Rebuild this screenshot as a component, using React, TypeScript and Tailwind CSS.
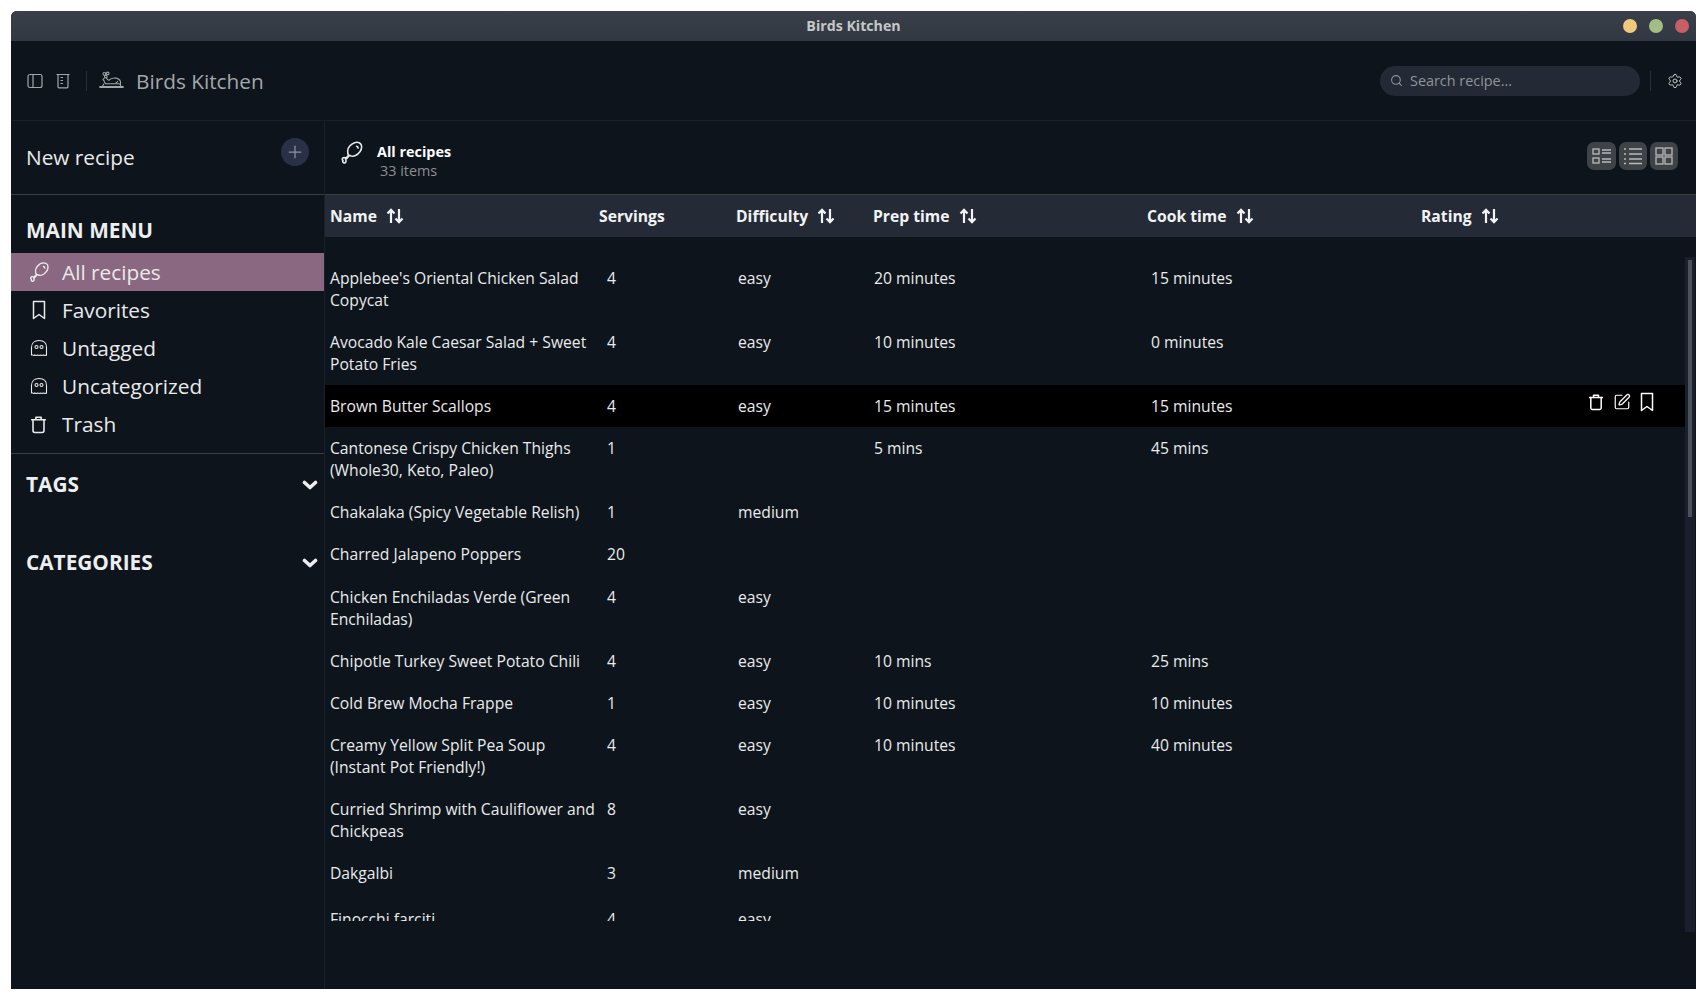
import { Plus, Search, Settings, SquarePen } from "lucide-react"

type Recipe = { name: string; servings?: string; difficulty?: string; prep?: string; cook?: string; active?: boolean; tall?: boolean }

const recipes: Recipe[] = [
  { name: "Applebee's Oriental Chicken Salad Copycat", servings: "4", difficulty: "easy", prep: "20 minutes", cook: "15 minutes" },
  { name: "Avocado Kale Caesar Salad + Sweet Potato Fries", servings: "4", difficulty: "easy", prep: "10 minutes", cook: "0 minutes" },
  { name: "Brown Butter Scallops", servings: "4", difficulty: "easy", prep: "15 minutes", cook: "15 minutes", active: true },
  { name: "Cantonese Crispy Chicken Thighs (Whole30, Keto, Paleo)", servings: "1", prep: "5 mins", cook: "45 mins" },
  { name: "Chakalaka (Spicy Vegetable Relish)", servings: "1", difficulty: "medium" },
  { name: "Charred Jalapeno Poppers", servings: "20" },
  { name: "Chicken Enchiladas Verde (Green Enchiladas)", servings: "4", difficulty: "easy" },
  { name: "Chipotle Turkey Sweet Potato Chili", servings: "4", difficulty: "easy", prep: "10 mins", cook: "25 mins" },
  { name: "Cold Brew Mocha Frappe", servings: "1", difficulty: "easy", prep: "10 minutes", cook: "10 minutes" },
  { name: "Creamy Yellow Split Pea Soup (Instant Pot Friendly!)", servings: "4", difficulty: "easy", prep: "10 minutes", cook: "40 minutes" },
  { name: "Curried Shrimp with Cauliflower and Chickpeas", servings: "8", difficulty: "easy" },
  { name: "Dakgalbi", servings: "3", difficulty: "medium", tall: true },
  { name: "Finocchi farciti", servings: "4", difficulty: "easy" },
]

function Drumstick({ className }: { className?: string }) {
  return (
    <svg viewBox="0 0 24 24" fill="none" stroke="currentColor" strokeWidth="1.4" strokeLinejoin="round" strokeLinecap="round" className={className}>
      <path d="M9.5 14.5c-1.4-2-1.3-5.600.9-8.200C12.800 3.400 16.500 2 19.200 3.500c2.500 1.400 2.300 5.200.3 7.900-2.100 2.900-5.600 4.500-8 3.600l-1.800-.5Z" />
      <path d="M9.500 14.500 6.800 17.200c-.6-.7-1.900-.9-2.600-.2-.7.700-.5 1.700.2 2.100-.4.700-.2 1.700.6 2 .9.400 1.900-.1 2.100-1 .2-.7 0-1.300-.4-1.700l2.800-2.800" />
      <path d="M16.500 6.500c.8.200 1.300.8 1.400 1.600" />
    </svg>
  )
}

function Ghost({ className }: { className?: string }) {
  return (
    <svg viewBox="0 0 18 18" fill="none" stroke="currentColor" strokeWidth="1.1" className={className}>
      <path d="M1.500 16V8.500C1.500 4 4.500 1.500 9 1.500S16.500 4 16.500 8.500V16c-.7.600-1 .600-1.500 0-.5.600-1 .600-1.500 0-.5.600-1 .600-1.500 0-.5.600-1 .600-1.500 0-.5.600-1 .600-1.500 0-.5.600-1 .600-1.500 0-.5.600-1 .600-1.500 0-.5.600-.8.600-1.500 0-.5.600-1 .600-1.500 0Z" />
      <circle cx="6.500" cy="8" r="1.500" />
      <circle cx="11.500" cy="8" r="1.500" />
    </svg>
  )
}

function TrashCan({ className }: { className?: string }) {
  return (
    <svg viewBox="0 0 18 18" fill="none" stroke="currentColor" strokeWidth="1.500" strokeLinejoin="round" className={className}>
      <path d="M2 4.500h14" />
      <path d="M6.500 4.500V2.200h5v2.300" />
      <path d="M3.800 4.500v10.300c0 1 .6 1.700 1.600 1.700h7.200c1 0 1.600-.7 1.600-1.700V4.500" />
    </svg>
  )
}

function BookmarkIcon({ className }: { className?: string }) {
  return (
    <svg viewBox="0 0 14 20" fill="none" stroke="currentColor" strokeWidth="1.500" strokeLinejoin="round" className={className}>
      <path d="M1.500 1.500h11v17L7 14.500l-5.500 4Z" />
    </svg>
  )
}

function Chevron() {
  return (
    <svg viewBox="0 0 16 10" fill="none" stroke="currentColor" strokeWidth="3.600" strokeLinecap="round" strokeLinejoin="round" className="h-[10px] w-[16px]">
      <path d="M2.500 2.500 8 7.500l5.500-5" />
    </svg>
  )
}

function BirdLogo({ className }: { className?: string }) {
  return (
    <svg viewBox="0 0 26 20" fill="none" stroke="currentColor" strokeWidth="1.100" strokeLinecap="round" strokeLinejoin="round" className={className}>
      <circle cx="5.500" cy="3" r="1.500" />
      <circle cx="9" cy="2.600" r="1.400" />
      <circle cx="7" cy="5.800" r="1.400" />
      <path d="M7.500 7c.6 1.800 1.400 2.600 2.700 2.800 1.800-2 4.800-2.900 7.800-2.300 3.300.7 5 3.500 4.500 6.700" />
      <path d="M5.500 7.500 4 8.800c1.400 1.300 2 3 2.600 4.700h14" />
      <path d="M17.800 12.200c.7 0 1.300-.5 1.600-1.200" />
      <path d="M1 16.800h24" strokeWidth="2" />
      <path d="M5 13.500 3.500 16M21.500 13.500l1.500 2.500" />
    </svg>
  )
}

function SortArrows() {
  return (
    <svg viewBox="0 0 18 16" fill="none" stroke="currentColor" strokeWidth="2.200" className="ml-[9px] h-[16px] w-[18px]">
      <path d="M5 15V2M1.500 5.500 5 1.800l3.500 3.700" />
      <path d="M13 1v13M9.500 10.500l3.500 3.700 3.500-3.700" />
    </svg>
  )
}

function CardsIcon() {
  return (
    <svg viewBox="0 0 20 18" fill="none" stroke="currentColor" strokeWidth="1.300" className="h-[18px] w-[20px]">
      <rect x="1" y="2" width="6" height="5" />
      <rect x="1" y="11" width="6" height="5" />
      <path d="M10 3h9M10 6h9M10 12h9M10 15h9" />
    </svg>
  )
}

function ListIcon() {
  return (
    <svg viewBox="0 0 20 18" fill="none" stroke="currentColor" strokeWidth="1.300" className="h-[18px] w-[20px]">
      <path d="M1 2h2M1 7h2M1 12h2M1 16.500h2" />
      <path d="M6 2h13M6 7h13M6 12h13M6 16.500h13" />
    </svg>
  )
}

function GridIcon() {
  return (
    <svg viewBox="0 0 18 18" fill="none" stroke="currentColor" strokeWidth="1.300" className="h-[18px] w-[18px]">
      <rect x="1" y="1" width="7" height="7" />
      <rect x="10" y="1" width="7" height="7" />
      <rect x="1" y="10" width="7" height="7" />
      <rect x="10" y="10" width="7" height="7" />
    </svg>
  )
}

function MenuItem({ icon, label, active }: { icon: React.ReactNode; label: string; active?: boolean }) {
  return (
    <div className={`flex h-[38px] items-center text-[20.8px] text-[#e8eaeb] ${active ? "bg-[#8a6881]" : ""}`}>
      <span className="flex w-[51px] justify-center pl-[4px]">{icon}</span>
      <span className="translate-y-[1px]">{label}</span>
    </div>
  )
}

function HeaderCell({ label, width, sort = true }: { label: string; width: string; sort?: boolean }) {
  return (
    <div className={`flex items-center ${width}`}>
      <span className="translate-y-[1px]">{label}</span>
      {sort && <SortArrows />}
    </div>
  )
}

function Row({ recipe }: { recipe: Recipe }) {
  return (
    <div className={`flex shrink-0 items-start pl-[5px] pt-[10px] leading-[22px] text-[#e9ebec] ${recipe.tall ? "pb-[14px]" : "pb-[10.1px]"} ${recipe.active ? "bg-black" : ""}`}>
      <div className="w-[277px] pr-[4px]">{recipe.name}</div>
      <div className="w-[131px]">{recipe.servings}</div>
      <div className="w-[136px]">{recipe.difficulty}</div>
      <div className="w-[277px]">{recipe.prep}</div>
      <div className="w-[280px]">{recipe.cook}</div>
      {recipe.active && (
        <div className="ml-[156px] flex -translate-y-[3px] items-center gap-[8px] text-white">
          <TrashCan className="h-[18px] w-[18px]" />
          <SquarePen size={18} strokeWidth={1.6} />
          <BookmarkIcon className="ml-[1px] h-[20px] w-[14px]" />
        </div>
      )}
    </div>
  )
}

export default function App() {
  return (
    <div className="h-[1000px] bg-white pl-[11px] pt-[11px] font-['Open_Sans',sans-serif]">
      <div className="flex h-[978px] w-[1685px] flex-col overflow-hidden rounded-t-[6px] bg-[#0e141b]">
        <div className="relative flex h-[30px] shrink-0 items-center justify-center bg-gradient-to-b from-[#3a404a] to-[#323842] text-[14.2px] font-bold text-[#c5c8c6]">
          Birds Kitchen
          <div className="absolute right-[7px] top-[8px] flex gap-[12px]">
            <span className="h-[14px] w-[14px] rounded-full bg-[#f0c97f]" />
            <span className="h-[14px] w-[14px] rounded-full bg-[#a3bd85]" />
            <span className="h-[14px] w-[14px] rounded-full bg-[#c65f67]" />
          </div>
        </div>

        <header className="flex h-[80px] shrink-0 items-center border-b border-[#1a1f26] text-[#a3a7aa]">
          <svg viewBox="0 0 16 16" fill="none" stroke="currentColor" strokeWidth="1.200" className="ml-[16px] h-[16px] w-[16px]">
            <rect x="1" y="1.500" width="14" height="13" rx="2" />
            <path d="M6 1.500v13" />
          </svg>
          <svg viewBox="0 0 14 16" fill="none" stroke="currentColor" strokeWidth="1.200" className="ml-[13px] h-[16px] w-[14px]">
            <path d="M.500 1.500h13M2 1.500v12.300c0 .7.400 1 1 1h8c.6 0 1-.3 1-1V1.500" />
            <path d="M4.500 4.500h2.500M4.500 7.500h2.500M4.500 10.500h2.500" />
          </svg>
          <span className="ml-[16px] h-[20px] w-px bg-[#2b3036]" />
          <BirdLogo className="ml-[12px] h-[19px] w-[25px]" />
          <span className="ml-[12px] translate-y-[1px] text-[20.8px]">Birds Kitchen</span>
          <div className="ml-auto flex h-[30px] w-[260px] items-center rounded-full bg-[#232a35] pl-[10px] text-[14.4px] text-[#8f959b]">
            <Search size={13} strokeWidth={2} />
            <span className="ml-[7px]">Search recipe...</span>
          </div>
          <span className="ml-[10px] h-[20px] w-px bg-[#2b3036]" />
          <Settings size={16} strokeWidth={1.500} className="ml-[16px] mr-[13px] text-[#c5c8ca]" />
        </header>

        <div className="flex min-h-0 flex-1">
          <aside className="w-[314px] shrink-0 border-r border-[#1a1f2c]">
            <div className="flex h-[74px] items-start justify-between border-b border-[#3a3d42] pl-[15px] pr-[15px]">
              <span className="mt-[21px] text-[20.8px] leading-[30px] text-[#e8eaeb]">New recipe</span>
              <span className="mt-[17px] flex h-[28px] w-[28px] items-center justify-center rounded-full bg-[#2a3045] text-[#8d93a3]">
                <Plus size={20} strokeWidth={1.500} />
              </span>
            </div>
            <h2 className="pl-[15px] pt-[20px] text-[20.8px] font-bold leading-[30px] text-[#eceeef]">MAIN MENU</h2>
            <div className="mt-[8px]">
              <MenuItem active label="All recipes" icon={<Drumstick className="h-[24px] w-[24px]" />} />
              <MenuItem label="Favorites" icon={<BookmarkIcon className="h-[20px] w-[14px]" />} />
              <MenuItem label="Untagged" icon={<Ghost className="h-[18px] w-[18px]" />} />
              <MenuItem label="Uncategorized" icon={<Ghost className="h-[18px] w-[18px]" />} />
              <MenuItem label="Trash" icon={<TrashCan className="h-[19px] w-[19px]" />} />
            </div>
            <div className="mt-[10px] border-t border-[#3a3d42] pl-[15px] pr-[6px]">
              <div className="flex h-[60px] items-center justify-between pt-[1px] text-[20.8px] font-bold text-[#eceeef]">
                <span>TAGS</span>
                <Chevron />
              </div>
              <div className="mt-[18px] flex h-[60px] items-center justify-between pt-[1px] text-[20.8px] font-bold text-[#eceeef]">
                <span>CATEGORIES</span>
                <Chevron />
              </div>
            </div>
          </aside>

          <main className="flex min-w-0 flex-1 flex-col">
            <div className="flex h-[74px] shrink-0 items-start border-b border-[#3a3d42]">
              <Drumstick className="ml-[13px] mt-[18px] h-[27px] w-[27px] text-[#e8eaeb]" />
              <div className="ml-[12px] mt-[21px] text-[14.4px] leading-[19px]">
                <div className="font-bold text-white">All recipes</div>
                <div className="ml-[3px] text-[#8c9094]">33 items</div>
              </div>
              <div className="ml-auto mr-[18px] mt-[21px] flex gap-[3px] text-[#b8babc]">
                <span className="flex h-[28px] w-[29px] items-center justify-center rounded-[7px] bg-[#3f4347]"><CardsIcon /></span>
                <span className="flex h-[28px] w-[28px] items-center justify-center rounded-[7px] bg-[#3f4347]"><ListIcon /></span>
                <span className="flex h-[28px] w-[28px] items-center justify-center rounded-[7px] bg-[#3f4347]"><GridIcon /></span>
              </div>
            </div>

            <div className="flex h-[42px] shrink-0 items-center bg-[#252b36] pl-[5px] text-[15.7px] font-bold text-[#f2f3f4]">
              <HeaderCell label="Name" width="w-[269px]" />
              <HeaderCell label="Servings" width="w-[137px]" sort={false} />
              <HeaderCell label="Difficulty" width="w-[137px]" />
              <HeaderCell label="Prep time" width="w-[274px]" />
              <HeaderCell label="Cook time" width="w-[274px]" />
              <HeaderCell label="Rating" width="w-[120px]" />
            </div>

            <div className="mt-[20px] flex h-[675px] shrink-0 items-start">
              <div className="flex h-[664px] min-w-0 flex-1 flex-col overflow-hidden text-[15.68px]">
                {recipes.map((r) => (
                  <Row key={r.name} recipe={r} />
                ))}
              </div>
              <div className="h-full w-[10px] shrink-0 bg-[#1a1f2e] px-[3px] pt-[3px]">
                <div className="h-[257px] bg-[#4b5158]" />
              </div>
              <div className="w-px shrink-0" />
            </div>
          </main>
        </div>
      </div>
    </div>
  )
}
